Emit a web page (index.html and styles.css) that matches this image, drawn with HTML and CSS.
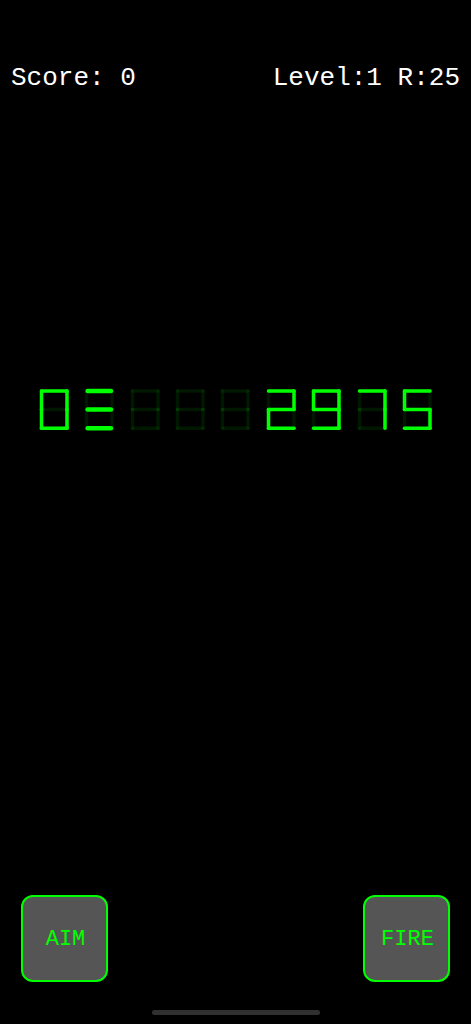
FILE: index.html
```html
<!DOCTYPE html>
<html lang="en">
<head>
    <meta charset="UTF-8">
    <meta name="viewport" content="width=device-width, initial-scale=1.0">
    <title>Number Invaders</title>
    <link rel="stylesheet" href="styles.css">
</head>
<body>
    <header class="status">
        <div>Score: <span id="score">0</span></div>
        <div>Level:<span id="level">1</span> R:<span id="remaining">25</span></div>
    </header>

    <main class="game">
        <div class="display" id="display"></div>
    </main>

    <div class="controls">
        <button type="button" class="control">AIM</button>
        <button type="button" class="control">FIRE</button>
    </div>

    <div class="home-bar"></div>

    <script>
        // Segment lines, a-g in the usual order
        const segments = {
            a: 'M3.5 3H29',
            b: 'M29 3V21.5',
            c: 'M29 21.5V40.3',
            d: 'M3.5 40.3H29',
            e: 'M3.5 21.5V40.3',
            f: 'M3.5 3V21.5',
            g: 'M3.5 21.5H29'
        };

        // Which segments are lit for each character
        const characters = {
            '0': 'abcdef',
            '2': 'abged',
            '5': 'afgcd',
            '7': 'abc',
            '9': 'abcdfg',
            ' ': ''
        };

        // Remaining lives: three thicker bars
        const lives = 'M4.7 3H27.9M4.7 21.5H27.9M4.7 40.3H27.9';

        function drawCharacter(char) {
            let paths = '';
            for (const name in segments) {
                paths += `<path class="unlit" d="${segments[name]}"/>`;
            }
            if (char === '=') {
                paths += `<path class="lit lives" d="${lives}"/>`;
            } else {
                for (const name of characters[char]) {
                    paths += `<path class="lit" d="${segments[name]}"/>`;
                }
            }
            return `<svg class="digit" viewBox="0 0 32 44">${paths}</svg>`;
        }

        document.getElementById('display').innerHTML =
            [...'0=   2975'].map(drawCharacter).join('');
    </script>
</body>
</html>
```
FILE: styles.css
```css
* {
    box-sizing: border-box;
}
body {
    display: flex;
    flex-direction: column;
    min-height: 100vh;
    margin: 0;
    padding: 63px 0 9px;
    background-color: #000;
    color: #fff;
    font-family: "Courier New", "Liberation Mono", monospace;
}
.status {
    display: flex;
    justify-content: space-between;
    padding: 0 11px;
    font-size: 26px;
    line-height: 30px;
}
.game {
    flex: 1;
    padding-top: 295px;
}
.display {
    display: grid;
    grid-template-columns: repeat(9, 1fr);
    justify-items: center;
    padding: 0 31px;
}
.digit {
    display: block;
    width: 32px;
    height: 44px;
    fill: none;
    stroke-linecap: round;
}
.unlit {
    stroke: rgba(0, 255, 0, 0.09);
    stroke-width: 3.5px;
}
.lit {
    stroke: #0f0;
    stroke-width: 3.5px;
}
.lives {
    stroke-width: 4.6px;
}
.controls {
    display: flex;
    justify-content: space-between;
    padding: 0 21px;
}
.control {
    width: 87px;
    height: 87px;
    padding: 2px 0 0 2px;
    background-color: #555;
    color: #0f0;
    border: 2px solid #0f0;
    border-radius: 12px;
    font-family: inherit;
    font-size: 22px;
    cursor: pointer;
}
.home-bar {
    width: 168px;
    height: 5px;
    margin: 28px auto 0;
    background-color: #303030;
    border-radius: 3px;
}
```
